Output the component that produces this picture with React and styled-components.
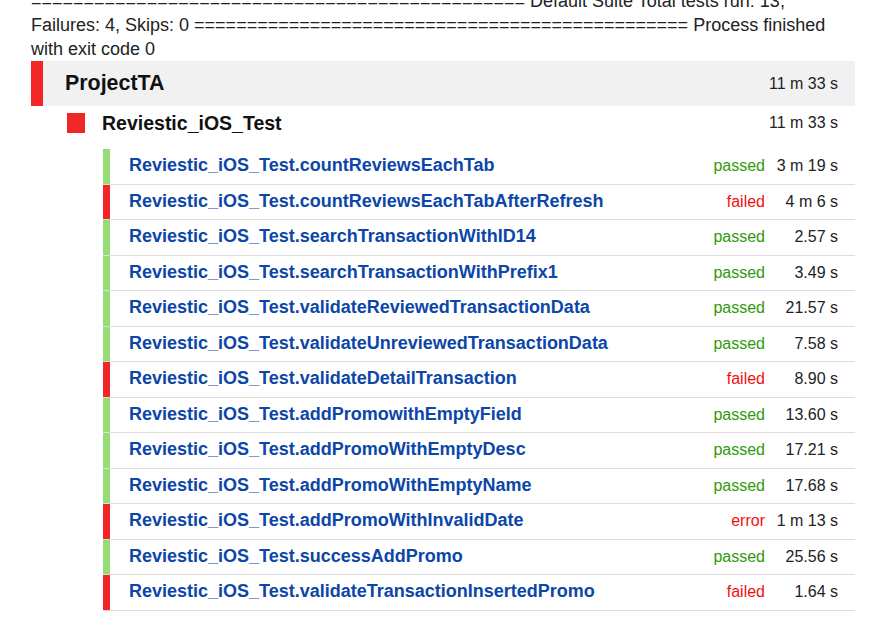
import React from "react";
import styled, { createGlobalStyle } from "styled-components";

const GlobalStyle = createGlobalStyle`
  html, body {
    margin: 0;
    padding: 0;
    background: #ffffff;
    font-family: "Liberation Sans", Arial, sans-serif;
    color: #222222;
  }
`;

const Page = styled.div`
  width: 824px;
  margin-left: 31px;
`;

const ConsoleText = styled.p`
  margin: -11px 0 0 0;
  font-size: 18px;
  line-height: 24px;
  color: #222222;
  word-break: normal;
`;

const ProjectHeader = styled.div`
  height: 45px;
  display: flex;
  align-items: center;
  justify-content: space-between;
  background: #f1f1f1;
  border-left: 12px solid #f12727;
  padding: 0 17px 0 22px;
`;

const ProjectName = styled.span`
  font-size: 21.4px;
  font-weight: bold;
  color: #111111;
`;

const Duration = styled.span`
  font-size: 16px;
  color: #222222;
  white-space: nowrap;
`;

const SuiteHeader = styled.div`
  margin-top: 7px;
  height: 20px;
  display: flex;
  align-items: center;
  padding: 0 17px 0 36px;
`;

const StatusSquare = styled.span`
  width: 18px;
  height: 20px;
  background: ${(p) => (p.$ok ? "#94dc74" : "#f12727")};
  flex: none;
`;

const SuiteName = styled.span`
  flex: 1;
  margin-left: 17px;
  font-size: 19.5px;
  line-height: 18px;
  font-weight: bold;
  color: #111111;
`;

const TestList = styled.div`
  margin: 16px 0 0 72px;
  display: flex;
  flex-direction: column;
`;

const TestRow = styled.div`
  height: 34.5px;
  display: grid;
  grid-template-columns: 7px 1fr auto 90px;
  align-items: center;
  border-bottom: 1px solid #dddddd;
`;

const Bar = styled.span`
  align-self: stretch;
  background: ${(p) => (p.$status === "passed" ? "#94dc74" : "#f12727")};
`;

const TestName = styled.span`
  padding-left: 19px;
  padding-bottom: 1px;
  font-size: 18px;
  font-weight: bold;
  color: #0b46a8;
  white-space: nowrap;
`;

const Status = styled.span`
  font-size: 16px;
  text-align: right;
  color: ${(p) => (p.$status === "passed" ? "#2f9a0a" : "#f01010")};
`;

const TestTime = styled.span`
  font-size: 16px;
  text-align: right;
  padding-right: 17px;
  color: #222222;
  white-space: nowrap;
`;

const SEP = "===============================================";

const tests = [
  ["countReviewsEachTab", "passed", "3 m 19 s"],
  ["countReviewsEachTabAfterRefresh", "failed", "4 m 6 s"],
  ["searchTransactionWithID14", "passed", "2.57 s"],
  ["searchTransactionWithPrefix1", "passed", "3.49 s"],
  ["validateReviewedTransactionData", "passed", "21.57 s"],
  ["validateUnreviewedTransactionData", "passed", "7.58 s"],
  ["validateDetailTransaction", "failed", "8.90 s"],
  ["addPromowithEmptyField", "passed", "13.60 s"],
  ["addPromoWithEmptyDesc", "passed", "17.21 s"],
  ["addPromoWithEmptyName", "passed", "17.68 s"],
  ["addPromoWithInvalidDate", "error", "1 m 13 s"],
  ["successAddPromo", "passed", "25.56 s"],
  ["validateTransactionInsertedPromo", "failed", "1.64 s"],
];

export default function App() {
  return (
    <>
      <GlobalStyle />
      <Page>
        <ConsoleText>
          {SEP} Default Suite Total tests run: 13, Failures: 4, Skips: 0 {SEP}{" "}
          Process finished with exit code 0
        </ConsoleText>
        <ProjectHeader>
          <ProjectName>ProjectTA</ProjectName>
          <Duration>11 m 33 s</Duration>
        </ProjectHeader>
        <SuiteHeader>
          <StatusSquare />
          <SuiteName>Reviestic_iOS_Test</SuiteName>
          <Duration>11 m 33 s</Duration>
        </SuiteHeader>
        <TestList>
          {tests.map(([name, status, time]) => (
            <TestRow key={name}>
              <Bar $status={status} />
              <TestName>Reviestic_iOS_Test.{name}</TestName>
              <Status $status={status}>{status}</Status>
              <TestTime>{time}</TestTime>
            </TestRow>
          ))}
        </TestList>
      </Page>
    </>
  );
}
